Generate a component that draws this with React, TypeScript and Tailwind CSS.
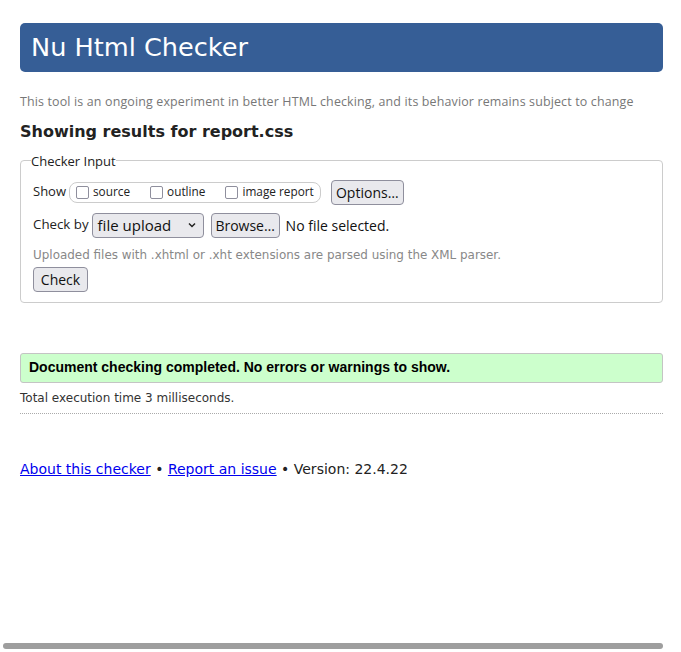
import React from "react";

function Box({ label }: { label: string }) {
  return (
    <label className="flex items-center gap-[4px] text-[11.8px] text-[#222]">
      <span className="inline-block w-[13px] h-[13px] border border-[#8f8f9d] rounded-[2px] bg-white" />
      <span>{label}</span>
    </label>
  );
}

export default function App() {
  return (
    <div className="h-[652px] w-[681px] bg-white flex flex-col overflow-hidden font-['DejaVu_Sans',sans-serif] text-[#222]">
      <div className="pl-5 pt-[23px] w-[663px]">
        <div className="h-[49px] bg-[#365e96] rounded-[5px] flex items-center px-3">
          <h1 className="text-white text-[25.6px] leading-none font-['DejaVu_Sans',sans-serif] -ml-[1px]">Nu Html Checker</h1>
        </div>
        <p className="mt-[21px] text-[12.45px] text-[#777] font-['Open_Sans',sans-serif] tracking-[0.15px] whitespace-nowrap">
          This tool is an ongoing experiment in better HTML checking, and its behavior remains subject to change
        </p>
        <h2 className="mt-[10px] text-[16px] font-bold leading-[20px]">Showing results for report.css</h2>
        <fieldset className="mt-[11px] border border-[#ccc] rounded-[4px] pl-3 pr-3 pt-[11px] pb-[10px]">
          <legend className="-ml-[2px] text-[13px] font-['Open_Sans',sans-serif] text-[#222] leading-[16px]">Checker Input</legend>
          <div className="flex items-center h-[25px] font-['Open_Sans',sans-serif] text-[13px]">
            <span>Show</span>
            <div className="ml-[3px] flex items-center gap-[20px] h-[21px] border border-[#ccc] rounded-[8px] pl-[6px] pr-[6px]">
              <Box label="source" />
              <Box label="outline" />
              <Box label="image report" />
            </div>
            <button className="ml-[10px] h-[25px] w-[73px] bg-[#e9e9ed] border border-[#8f8f9d] rounded-[4px] text-[14px] text-[#111]">Options…</button>
          </div>
          <div className="mt-[8px] flex items-center h-[25px] font-['Open_Sans',sans-serif] text-[13.3px]">
            <span>Check by</span>
            <div className="ml-[3px] h-[25px] w-[112px] bg-[#e9e9ed] border border-[#8f8f9d] rounded-[4px] flex items-center justify-between pl-[5px] pr-[6px] text-[15px] text-[#111]">
              <span>file upload</span>
              <svg width="10" height="10" viewBox="0 0 10 10"><path d="M2 3.5 L5 6.5 L8 3.5" fill="none" stroke="#222" strokeWidth="1.5" /></svg>
            </div>
            <button className="ml-[7px] h-[25px] w-[69px] bg-[#e9e9ed] border border-[#8f8f9d] rounded-[4px] text-[14px] text-[#111]">Browse…</button>
            <span className="ml-[6px] text-[14px] text-[#111]">No file selected.</span>
          </div>
          <p className="mt-[10px] text-[11.95px] text-[#888] leading-[15px]">Uploaded files with .xhtml or .xht extensions are parsed using the XML parser.</p>
          <button className="mt-[4px] h-[25px] w-[55px] bg-[#e9e9ed] border border-[#8f8f9d] rounded-[4px] text-[14px] text-[#111] font-['Open_Sans',sans-serif]">Check</button>
        </fieldset>
        <div className="mt-[50px] h-[30px] bg-[#ccffcc] border border-[#c4c4c4] rounded-[3px] flex items-center px-2 font-['Liberation_Sans',sans-serif] font-bold text-[14px] text-black">
          Document checking completed. No errors or warnings to show.
        </div>
        <p className="mt-[7px] text-[12px] text-[#333] leading-[16px]">Total execution time 3 milliseconds.</p>
        <div className="mt-[7px] border-t border-dotted border-[#aaa]" />
        <p className="mt-[45px] text-[14px] text-[#222]">
          <a href="#" className="text-[#0000ee] underline">About this checker</a> • <a href="#" className="text-[#0000ee] underline">Report an issue</a> • Version: 22.4.22
        </p>
      </div>
      <div className="mt-auto mb-[3px] ml-[3px] w-[660px] h-[6px] rounded-full bg-[#9e9e9e]" />
    </div>
  );
}
